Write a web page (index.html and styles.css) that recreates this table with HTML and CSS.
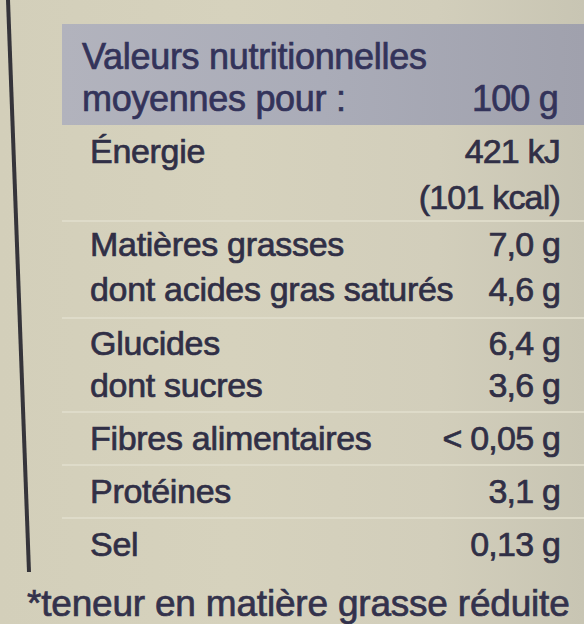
FILE: index.html
```html
<!DOCTYPE html>
<html lang="fr">
<head>
<meta charset="utf-8">
<title>Valeurs nutritionnelles</title>
<link rel="stylesheet" href="styles.css">
</head>
<body>
<div class="page">
  <div class="main">
    <div class="gutter">
      <svg class="rule" width="62" height="572" viewBox="0 0 62 572">
        <line x1="8" y1="0" x2="29" y2="572" stroke="#35343a" stroke-width="4"/>
      </svg>
    </div>
    <div class="table">
      <div class="head">
        <div class="row"><span class="label">Valeurs nutritionnelles</span></div>
        <div class="row"><span class="label">moyennes pour :</span><span class="value">100 g</span></div>
      </div>
      <div class="group g-energy">
        <div class="row"><span class="label">Énergie</span><span class="value">421 kJ</span></div>
        <div class="row"><span class="label"></span><span class="value">(101 kcal)</span></div>
      </div>
      <div class="group g-fat">
        <div class="row"><span class="label">Matières grasses</span><span class="value">7,0 g</span></div>
        <div class="row"><span class="label">dont acides gras saturés</span><span class="value">4,6 g</span></div>
      </div>
      <div class="group g-carb">
        <div class="row"><span class="label">Glucides</span><span class="value">6,4 g</span></div>
        <div class="row"><span class="label">dont sucres</span><span class="value">3,6 g</span></div>
      </div>
      <div class="group g-single g-fib">
        <div class="row"><span class="label">Fibres alimentaires</span><span class="value">&lt; 0,05 g</span></div>
      </div>
      <div class="group g-single">
        <div class="row"><span class="label">Protéines</span><span class="value">3,1 g</span></div>
      </div>
      <div class="group g-single g-last">
        <div class="row"><span class="label">Sel</span><span class="value">0,13 g</span></div>
      </div>
    </div>
  </div>
  <p class="note">*teneur en matière grasse réduite</p>
</div>
</body>
</html>
```

FILE: styles.css
```css
html, body {
  margin: 0;
  padding: 0;
  height: 100%;
  overflow: hidden;
}

body {
  background: linear-gradient(90deg, #d3cfba 0%, #d6d2bd 40%, #d2cebb 75%, #c8c5b3 100%);
  font-family: "Liberation Sans", Arial, sans-serif;
  color: #302f46;
  -webkit-text-stroke: 0.7px currentColor;
}

.page {
  display: flex;
  flex-direction: column;
  width: 584px;
  height: 624px;
}

.main {
  display: flex;
  flex-direction: row;
}

.gutter {
  width: 62px;
  flex: none;
}

.rule {
  display: block;
}

.table {
  flex: 1;
  display: flex;
  flex-direction: column;
}

.head {
  margin-top: 24px;
  padding: 12px 26px 5px 20px;
  background: linear-gradient(90deg, #b2b3bd 0%, #aaacb8 50%, #a0a1ad 100%);
  color: #33335a;
}

.head .row {
  line-height: 42px;
  font-size: 36px;
}

.row {
  display: flex;
  justify-content: space-between;
  align-items: baseline;
  font-size: 34px;
  white-space: nowrap;
}

.label {
  letter-spacing: -0.3px;
}

.value {
  letter-spacing: -0.8px;
}

.group {
  padding: 0 24px 0 28px;
  border-bottom: 2px solid #dedbc9;
}

.g-energy {
  padding-top: 3px;
}

.g-energy .row {
  line-height: 46px;
}

.g-fat .row {
  line-height: 45px;
}

.g-fat {
  padding-bottom: 5px;
}

.g-carb {
  padding-top: 3px;
  padding-bottom: 5px;
}

.g-carb .row {
  line-height: 42px;
}

.g-fib .row {
  line-height: 49px;
}

.g-single .row {
  line-height: 51px;
}

.g-last {
  border-bottom: none;
}

.note {
  margin: 0;
  padding-left: 27px;
  font-size: 37px;
  line-height: 64px;
  letter-spacing: -0.2px;
  color: #33324c;
  white-space: nowrap;
}
```
